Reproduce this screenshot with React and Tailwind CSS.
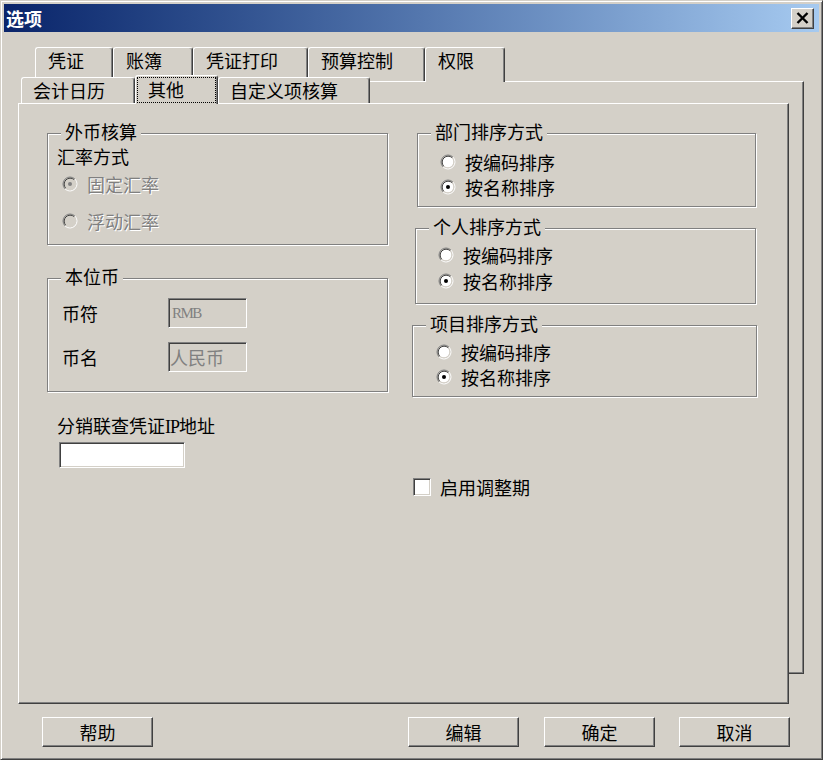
import React from "react";

const raised =
  "border border-t-white border-l-white border-r-[#404040] border-b-[#404040] shadow-[inset_-1px_-1px_0_#808080]";
const sunken =
  "border border-t-[#808080] border-l-[#808080] border-r-white border-b-white shadow-[inset_1px_1px_0_#404040,inset_-1px_-1px_0_#d4d0c8]";
const tabCls =
  "border-l border-t border-r border-l-white border-t-white border-r-[#404040] shadow-[inset_-1px_0_0_#808080] rounded-t-[3px] bg-[#d4d0c8]";
const disabledText = "text-[#808080] [text-shadow:1px_1px_0_#fff]";

function Radio({ checked, disabled }) {
  return (
    <svg width="16" height="16" viewBox="0 0 16 16" className="shrink-0">
      <circle cx="8" cy="8" r="5.5" fill={disabled ? "#d4d0c8" : "#fff"} />
      <path d="M3.05 12.95 A7 7 0 0 1 12.95 3.05" fill="none" stroke="#808080" />
      <path d="M12.95 3.05 A7 7 0 0 1 3.05 12.95" fill="none" stroke="#fff" />
      <path d="M3.76 12.24 A6 6 0 0 1 12.24 3.76" fill="none" stroke="#404040" />
      <path d="M12.24 3.76 A6 6 0 0 1 3.76 12.24" fill="none" stroke="#d4d0c8" />
      {checked && <circle cx="8" cy="8" r="2" fill={disabled ? "#808080" : "#000"} />}
    </svg>
  );
}

function RadioRow({ label, checked, disabled }) {
  return (
    <div className={"flex items-center h-[20px] gap-[9px] " + (disabled ? disabledText : "")}>
      <Radio checked={checked} disabled={disabled} />
      <span>{label}</span>
    </div>
  );
}

function Group({ label, className, children }) {
  return (
    <div
      className={
        "relative shrink-0 border border-[#808080] shadow-[inset_1px_1px_0_#fff,1px_1px_0_#fff] " +
        className
      }
    >
      <span className="absolute -top-[13px] left-[13px] px-[4px] bg-[#d4d0c8] leading-[20px] whitespace-nowrap">
        {label}
      </span>
      {children}
    </div>
  );
}

function Button({ children, className = "" }) {
  return (
    <div
      className={
        "w-[111px] h-[30px] flex items-center justify-center bg-[#d4d0c8] " + raised + " " + className
      }
    >
      {children}
    </div>
  );
}

export default function App() {
  return (
    <div className="w-[823px] h-[760px] overflow-hidden bg-[#d4d0c8] border border-t-[#d4d0c8] border-l-[#d4d0c8] border-r-[#404040] border-b-[#404040] shadow-[inset_1px_1px_0_#fff,inset_-1px_-1px_0_#808080] p-[3px] flex flex-col text-[18px] leading-[20px] text-black font-['Noto_Sans_CJK_SC','Noto_Sans',sans-serif]">
      {/* Title bar */}
      <div className="h-[28px] shrink-0 flex items-center justify-between bg-linear-to-r from-[#0a246a] to-[#a6caf0] pl-[2px] pr-[5px]">
        <span className="text-white font-bold text-[18px]">选项</span>
        <div className={"w-[23px] h-[21px] flex items-center justify-center bg-[#d4d0c8] " + raised}>
          <svg width="13" height="12" viewBox="0 0 13 12">
            <path d="M1.5 1 L11.5 11 M11.5 1 L1.5 11" stroke="#000" strokeWidth="2.4" />
          </svg>
        </div>
      </div>

      {/* Row 1 tabs */}
      <div className="flex mt-[15px] ml-[31px] h-[34px] shrink-0">
        <div className={"w-[78px] h-full pl-[12px] pt-[2px] " + tabCls}>凭证</div>
        <div className={"w-[80px] h-full pl-[12px] pt-[2px] " + tabCls}>账簿</div>
        <div className={"w-[115px] h-full pl-[12px] pt-[2px] " + tabCls}>凭证打印</div>
        <div className={"w-[117px] h-full pl-[12px] pt-[2px] " + tabCls}>预算控制</div>
        <div className={"relative w-[80px] h-[35px] -mb-[1px] pl-[12px] pt-[2px] " + tabCls}>权限</div>
      </div>

      {/* Back sheet */}
      <div className="ml-[28px] w-[772px] h-[593px] shrink-0 border-t border-r border-b border-t-white border-r-[#404040] border-b-[#404040] shadow-[inset_-1px_-1px_0_#808080]">
        {/* Row 2 tabs */}
        <div className="flex items-end -ml-[14px] pl-[3px] -mt-[7px] h-[28px]">
          <div className={"w-[114px] h-[26px] pl-[11px] pt-[2px] " + tabCls}>会计日历</div>
          <div className={"relative w-[83px] h-[29px] -mb-[1px] p-[1px] " + tabCls}>
            <div className="h-[26px] border border-dotted border-black pl-[10px] pt-[1px]">其他</div>
          </div>
          <div className={"w-[152px] h-[26px] pl-[11px] pt-[2px] " + tabCls}>自定义项核算</div>
        </div>

        {/* Front sheet */}
        <div className="-ml-[14px] w-[771px] h-[601px] bg-[#d4d0c8] border border-t-white border-l-white border-r-[#404040] border-b-[#404040] shadow-[inset_-1px_-1px_0_#808080] flex pl-[28px] pt-[29px]">
          {/* Left column */}
          <div className="flex flex-col w-[341px] shrink-0">
            <Group label="外币核算" className="w-[341px] h-[112px] pt-[12px] pl-[9px]">
              <div>汇率方式</div>
              <div className="mt-[8px] ml-[5px]">
                <RadioRow label="固定汇率" checked disabled />
              </div>
              <div className="mt-[17px] ml-[5px]">
                <RadioRow label="浮动汇率" disabled />
              </div>
            </Group>

            <Group label="本位币" className="mt-[33px] w-[341px] h-[114px] pt-[19px] pl-[14px]">
              <div className="flex items-center h-[30px]">
                <span className="w-[106px]">币符</span>
                <div className={"w-[79px] h-[30px] bg-[#d4d0c8] flex items-center pl-[3px] " + sunken}>
                  <span className="font-['Liberation_Serif',serif] text-[15px] tracking-[-1.5px] text-[#808080]">
                    RMB
                  </span>
                </div>
              </div>
              <div className="flex items-center h-[30px] mt-[14px]">
                <span className="w-[106px]">币名</span>
                <div className={"w-[79px] h-[30px] bg-[#d4d0c8] flex items-center pl-[1px] " + sunken}>
                  <span className="text-[#808080]">人民币</span>
                </div>
              </div>
            </Group>

            <div className="mt-[23px] ml-[10px]">
              分销联查凭证<span className="font-['Liberation_Serif',serif] tracking-[-1px]">IP</span>地址
            </div>
            <div className={"mt-[5px] ml-[12px] w-[126px] h-[26px] bg-white " + sunken}></div>
          </div>

          {/* Right column */}
          <div className="flex flex-col ml-[24px] w-[345px] shrink-0">
            <Group label="部门排序方式" className="ml-[5px] w-[339px] h-[74px] pt-[18px] pl-[22px] flex flex-col gap-[5px]">
              <RadioRow label="按编码排序" />
              <RadioRow label="按名称排序" checked />
            </Group>
            <Group label="个人排序方式" className="mt-[21px] ml-[3px] w-[341px] h-[76px] pt-[16px] pl-[22px] flex flex-col gap-[6px]">
              <RadioRow label="按编码排序" />
              <RadioRow label="按名称排序" checked />
            </Group>
            <Group label="项目排序方式" className="mt-[21px] w-[345px] h-[72px] pt-[16px] pl-[23px] flex flex-col gap-[5px]">
              <RadioRow label="按编码排序" />
              <RadioRow label="按名称排序" checked />
            </Group>
            <div className="mt-[80px] ml-[1px] flex items-center gap-[9px] h-[20px]">
              <div className={"w-[18px] h-[18px] bg-white shrink-0 " + sunken}></div>
              <span>启用调整期</span>
            </div>
          </div>
        </div>
      </div>

      {/* Buttons */}
      <div className="flex mt-[43px] ml-[38px] shrink-0">
        <Button>帮助</Button>
        <Button className="ml-[255px]">编辑</Button>
        <Button className="ml-[25px]">确定</Button>
        <Button className="ml-[24px]">取消</Button>
      </div>
    </div>
  );
}
